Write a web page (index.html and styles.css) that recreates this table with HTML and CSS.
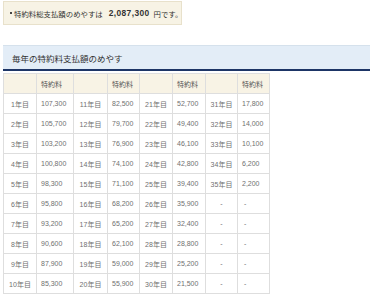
FILE: index.html
```html
<!DOCTYPE html>
<html lang="ja">
<head>
<meta charset="utf-8">
<link rel="stylesheet" href="styles.css">
</head>
<body>
<div class="page">
  <div class="total">
    <span class="bullet"></span>
    <span class="total-label">特約料総支払額のめやすは</span>
    <span class="total-num">2,087,300</span>
    <span class="total-unit">円です。</span>
  </div>

  <h2 class="title">毎年の特約料支払額のめやす</h2>

  <table class="fees">
    <colgroup>
      <col class="c1"><col class="c2"><col class="c3"><col class="c4">
      <col class="c5"><col class="c6"><col class="c7"><col class="c8">
    </colgroup>
    <thead>
      <tr><th></th><th>特約料</th><th></th><th>特約料</th><th></th><th>特約料</th><th></th><th>特約料</th></tr>
    </thead>
    <tbody>
      <tr><td class="y">1年目</td><td>107,300</td><td class="y">11年目</td><td>82,500</td><td class="y">21年目</td><td>52,700</td><td class="y">31年目</td><td>17,800</td></tr>
      <tr><td class="y">2年目</td><td>105,700</td><td class="y">12年目</td><td>79,700</td><td class="y">22年目</td><td>49,400</td><td class="y">32年目</td><td>14,000</td></tr>
      <tr><td class="y">3年目</td><td>103,200</td><td class="y">13年目</td><td>76,900</td><td class="y">23年目</td><td>46,100</td><td class="y">33年目</td><td>10,100</td></tr>
      <tr><td class="y">4年目</td><td>100,800</td><td class="y">14年目</td><td>74,100</td><td class="y">24年目</td><td>42,800</td><td class="y">34年目</td><td>6,200</td></tr>
      <tr><td class="y">5年目</td><td>98,300</td><td class="y">15年目</td><td>71,100</td><td class="y">25年目</td><td>39,400</td><td class="y">35年目</td><td>2,200</td></tr>
      <tr><td class="y">6年目</td><td>95,800</td><td class="y">16年目</td><td>68,200</td><td class="y">26年目</td><td>35,900</td><td class="y">-</td><td class="d">-</td></tr>
      <tr><td class="y">7年目</td><td>93,200</td><td class="y">17年目</td><td>65,200</td><td class="y">27年目</td><td>32,400</td><td class="y">-</td><td class="d">-</td></tr>
      <tr><td class="y">8年目</td><td>90,600</td><td class="y">18年目</td><td>62,100</td><td class="y">28年目</td><td>28,800</td><td class="y">-</td><td class="d">-</td></tr>
      <tr><td class="y">9年目</td><td>87,900</td><td class="y">19年目</td><td>59,000</td><td class="y">29年目</td><td>25,200</td><td class="y">-</td><td class="d">-</td></tr>
      <tr><td class="y">10年目</td><td>85,300</td><td class="y">20年目</td><td>55,900</td><td class="y">30年目</td><td>21,500</td><td class="y">-</td><td class="d">-</td></tr>
    </tbody>
  </table>
</div>
</body>
</html>
```

FILE: styles.css
```css
html, body {
  margin: 0;
  padding: 0;
  background: #ffffff;
}

body {
  font-family: "Liberation Sans", "Noto Sans CJK JP", sans-serif;
  color: #333;
}

.page {
  padding: 1px 4px 0 3px;
}

.total {
  width: 177px;
  height: 22px;
  border: 1px solid #e8e1cb;
  background: #f7f3e5;
  display: flex;
  align-items: center;
  font-size: 7.4px;
  color: #333;
  white-space: nowrap;
}

.bullet {
  flex: 0 0 2px;
  width: 2px;
  height: 2px;
  background: #444;
  margin: 0 2px 0 6px;
}

.total-num {
  font-weight: bold;
  font-size: 8.4px;
  letter-spacing: 0.4px;
  margin: 0 4px 0 6px;
}

.title {
  margin: 20px 0 2px 0;
  background: #e3edf7;
  border-top: 1px solid #d5e1ec;
  border-bottom: 2px solid #1d3566;
  font-size: 8.5px;
  font-weight: normal;
  color: #333;
  display: flex;
  align-items: center;
  padding-left: 9px;
  box-sizing: border-box;
  height: 26px;
}

.fees {
  border-collapse: collapse;
  table-layout: fixed;
  width: 266px;
  font-size: 7px;
  color: #707070;
}

.c1 { width: 33px; }
.c2 { width: 37px; }
.c3 { width: 34px; }
.c4 { width: 32px; }
.c5 { width: 33px; }
.c6 { width: 33px; }
.c7 { width: 32px; }
.c8 { width: 32px; }

.fees th,
.fees td {
  border: 1px solid #dedede;
  height: 19px;
  padding: 0 0 0 4px;
  text-align: left;
  white-space: nowrap;
  overflow: hidden;
}

.fees th {
  background: #f8f3e5;
  font-weight: normal;
  color: #555;
}

.fees td.y {
  text-align: center;
  padding: 0;
}

.fees td.d {
  padding-left: 6px;
}
```
